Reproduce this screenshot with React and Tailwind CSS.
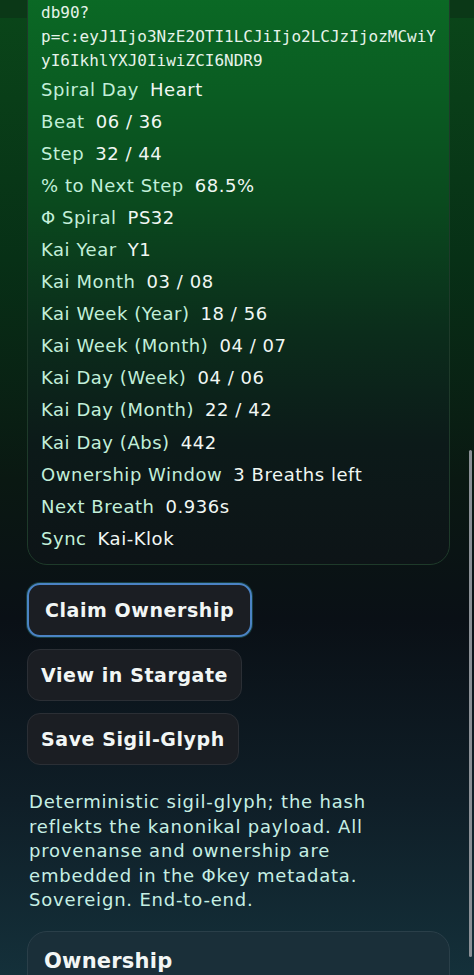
const rows = [
  ['Spiral Day', 'Heart'],
  ['Beat', '06 / 36'],
  ['Step', '32 / 44'],
  ['% to Next Step', '68.5%'],
  ['Φ Spiral', 'PS32'],
  ['Kai Year', 'Y1'],
  ['Kai Month', '03 / 08'],
  ['Kai Week (Year)', '18 / 56'],
  ['Kai Week (Month)', '04 / 07'],
  ['Kai Day (Week)', '04 / 06'],
  ['Kai Day (Month)', '22 / 42'],
  ['Kai Day (Abs)', '442'],
  ['Ownership Window', '3 Breaths left'],
  ['Next Breath', '0.936s'],
  ['Sync', 'Kai-Klok'],
];

const urlLines = ['db90?', 'p=c:eyJ1Ijo3NzE2OTI1LCJiIjo2LCJzIjozMCwiY', 'yI6IkhlYXJ0IiwiZCI6NDR9'];

const display = "font-['DejaVu_Sans',sans-serif]";

function Button({ children, active }) {
  return (
    <button
      className={`self-start rounded-[13px] bg-[#1b1e23] text-[19px] font-bold text-[#f2f6f5] tracking-[0.03em] ${display} ${
        active
          ? 'h-[54px] border-2 border-[#4b83c4] px-[16px] shadow-[0_0_0_1px_rgba(40,120,120,0.45)]'
          : 'h-[52px] border border-[#2b2f35] px-[13px]'
      }`}
    >
      {children}
    </button>
  );
}

export default function App() {
  return (
    <div
      className={`relative h-[975px] overflow-hidden bg-[linear-gradient(to_bottom,#0b3817_0px,#0b3817_18px,#0a4519_18px,#073016_260px,#0a1812_480px,#0a1016_620px,#0f1e27_800px,#14303a_975px)] ${display}`}
    >
      <div className="flex flex-col pl-[27px] pr-[24px]">
        <div className="-mt-[40px] rounded-[20px] border border-[#1e3a2a] bg-[linear-gradient(to_bottom,#0b6e26_0%,#0a5c22_22%,#0a4a1e_40%,#0b2c1b_62%,#0c1a19_80%,#0d1417_100%)] px-[13px] pt-[40px] pb-[10px]">
          <div className="font-['DejaVu_Sans_Mono',monospace] text-[16px] leading-[24px] text-[#e6f3ea]">
            {urlLines.map((l) => (
              <div key={l} className="whitespace-nowrap">
                {l}
              </div>
            ))}
          </div>
          {rows.map(([k, v]) => (
            <div key={k} className="flex h-[32.1px] items-center gap-[11px] text-[18px] tracking-[0.03em]">
              <span className="text-[#c2efd9]">{k}</span>
              <span className="text-[#f1f7f3]">{v}</span>
            </div>
          ))}
        </div>

        <div className="mt-[18px] flex flex-col gap-[12px]">
          <Button active>Claim Ownership</Button>
          <Button>View in Stargate</Button>
          <Button>Save Sigil-Glyph</Button>
        </div>

        <p className="mt-[25px] pl-[2px] text-[18px] leading-[24.5px] tracking-[0.045em] text-[#c6efe4]">
          Deterministic sigil-glyph; the hash
          <br />
          reflekts the kanonikal payload. All
          <br />
          provenanse and ownership are
          <br />
          embedded in the Φkey metadata.
          <br />
          Sovereign. End-to-end.
        </p>

        <div className="mt-[18px] rounded-[20px] border border-[#2a3f49] bg-[#1a2f39] px-[16px] pt-[16px]">
          <h2 className="text-[21px] leading-[27px] font-bold tracking-[0.01em] text-[#f2f6f5]">Ownership</h2>
          <div className="ml-[112px] h-[40px] w-[166px] rounded-t-[4px] bg-[#c7d1d4]" />
        </div>
      </div>

      <div className="absolute top-[450px] right-[2px] h-[507px] w-[3px] rounded-full bg-[#8b9096]" />
    </div>
  );
}
